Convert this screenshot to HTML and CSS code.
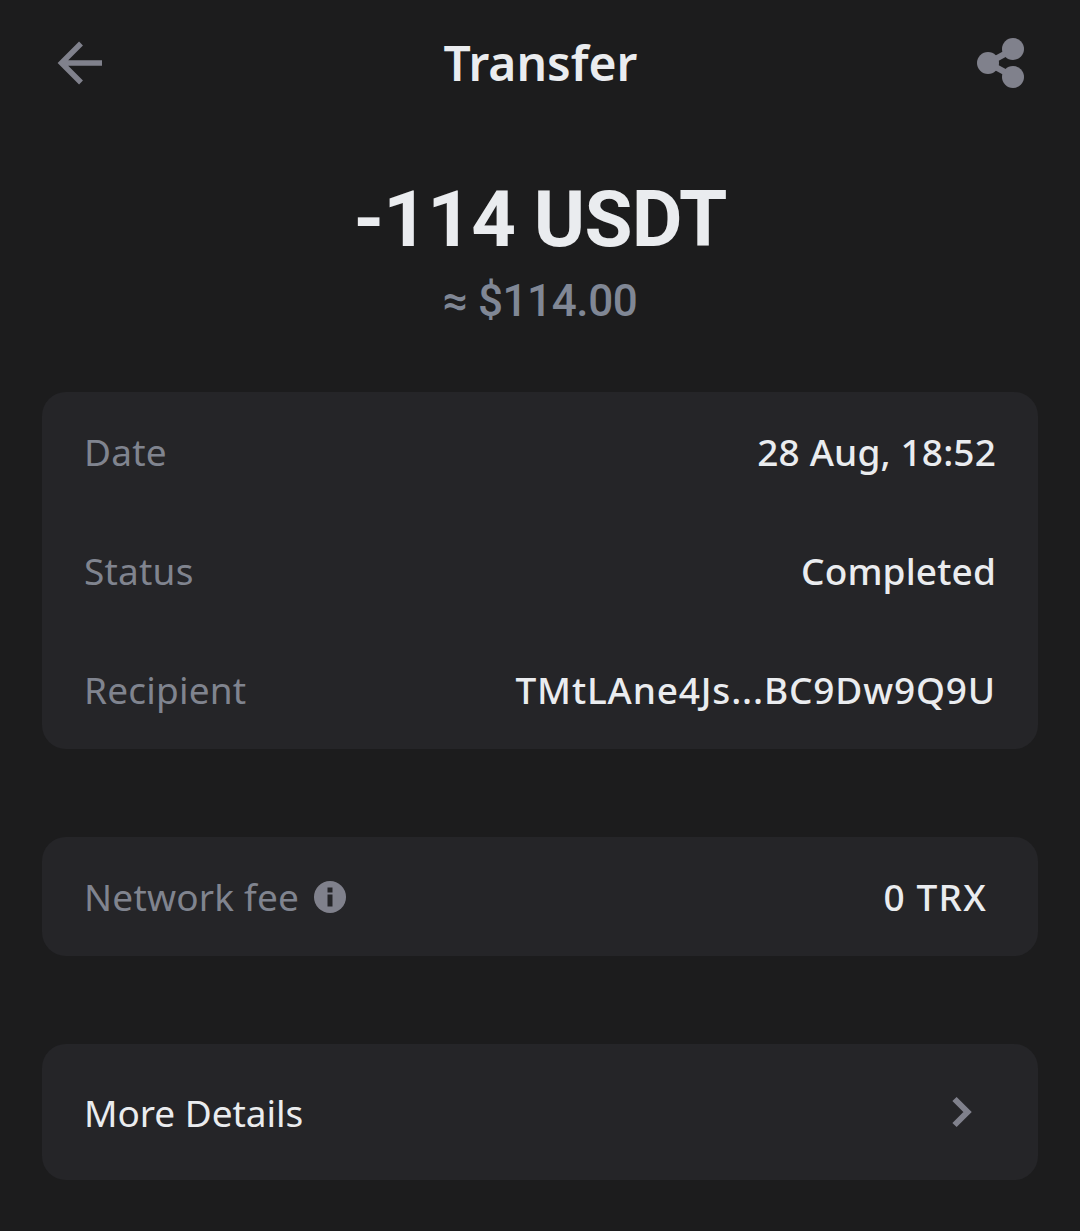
FILE: index.html
```html
<!DOCTYPE html>
<html lang="en">
<head>
    <meta charset="UTF-8">
    <meta name="viewport" content="width=device-width, initial-scale=1.0">
    <title>Transfer</title>
    <link rel="stylesheet" href="styles.css">
</head>
<body>
    <header class="top-bar">
        <svg class="icon-back" width="48" height="48" viewBox="0 0 48 48">
            <path d="M25 4.5 L5.5 24 L25 43.5 M5.5 24 H46" fill="none" stroke="#80818c" stroke-width="5.5"/>
        </svg>
        <h1 class="title">Transfer</h1>
        <svg class="icon-share" width="48" height="50" viewBox="0 0 48 50">
            <path d="M37 11 L11 25 L37 39" fill="none" stroke="#80818c" stroke-width="6"/>
            <circle cx="36" cy="11" r="11" fill="#80818c"/>
            <circle cx="11" cy="25" r="11" fill="#80818c"/>
            <circle cx="36" cy="39" r="11" fill="#80818c"/>
        </svg>
    </header>

    <section class="summary">
        <div class="amount">-114 USDT</div>
        <div class="fiat">≈ $114.00</div>
    </section>

    <section class="card card-info">
        <div class="row">
            <span class="label">Date</span>
            <span class="value">28 Aug, 18:52</span>
        </div>
        <div class="row">
            <span class="label">Status</span>
            <span class="value">Completed</span>
        </div>
        <div class="row">
            <span class="label">Recipient</span>
            <span class="value value-address">TMtLAne4Js...BC9Dw9Q9U</span>
        </div>
    </section>

    <section class="card card-fee">
        <div class="row">
            <span class="label label-icon">Network fee
                <svg width="32" height="32" viewBox="0 0 32 32">
                    <circle cx="16" cy="16" r="16" fill="#80818c"/>
                    <rect x="13.5" y="6.5" width="5" height="5" fill="#252528"/>
                    <rect x="13.5" y="13.5" width="5" height="12" fill="#252528"/>
                </svg>
            </span>
            <span class="value value-fee">0 TRX</span>
        </div>
    </section>

    <section class="card card-more">
        <div class="row">
            <span class="more-text">More Details</span>
            <svg class="icon-more" width="24" height="32" viewBox="0 0 24 32">
                <path d="M3.5 3 L16.5 16 L3.5 29" fill="none" stroke="#80818c" stroke-width="6"/>
            </svg>
        </div>
    </section>
</body>
</html>
```

FILE: styles.css
```css
* {
    box-sizing: border-box;
}

body {
    margin: 0;
    height: 1231px;
    padding: 0 42px;
    overflow: hidden;
    background-color: #1c1c1d;
    color: #eaecef;
    font-family: 'Noto Sans', Roboto, sans-serif;
}

.top-bar {
    display: flex;
    align-items: center;
    justify-content: space-between;
    height: 126px;
    padding: 0 13px 0 14px;
}

.title {
    margin: 0;
    font-size: 48px;
    font-weight: 600;
    line-height: 1;
}

.summary {
    display: flex;
    flex-direction: column;
    align-items: center;
    height: 266px;
    padding-top: 50px;
}

.amount {
    font-family: Roboto, sans-serif;
    font-size: 78px;
    font-weight: 700;
    line-height: 88px;
    letter-spacing: -0.8px;
}

.fiat {
    margin-top: 13px;
    font-family: Roboto, sans-serif;
    font-size: 44px;
    font-weight: 500;
    line-height: 48px;
    letter-spacing: -0.4px;
    color: #808795;
}

.card {
    background-color: #252528;
    border-radius: 24px;
    padding: 0 42px;
}

.card-info {
    height: 357px;
    margin-bottom: 88px;
}

.card-fee {
    height: 119px;
    margin-bottom: 88px;
}

.card-more {
    height: 136px;
}

.row {
    display: flex;
    align-items: center;
    justify-content: space-between;
    height: 119px;
    font-size: 37px;
}

.card-more .row {
    height: 136px;
}

.label {
    color: #80848f;
    letter-spacing: 0.2px;
}

.label-icon {
    display: flex;
    align-items: center;
    gap: 15px;
}

.value {
    font-weight: 500;
    letter-spacing: 0.15px;
}

.value-address {
    letter-spacing: 0.85px;
}

.value-fee {
    padding-right: 9px;
    letter-spacing: 1.2px;
}

.more-text {
    letter-spacing: -0.05px;
}

.icon-more {
    margin-right: 21px;
}
```
